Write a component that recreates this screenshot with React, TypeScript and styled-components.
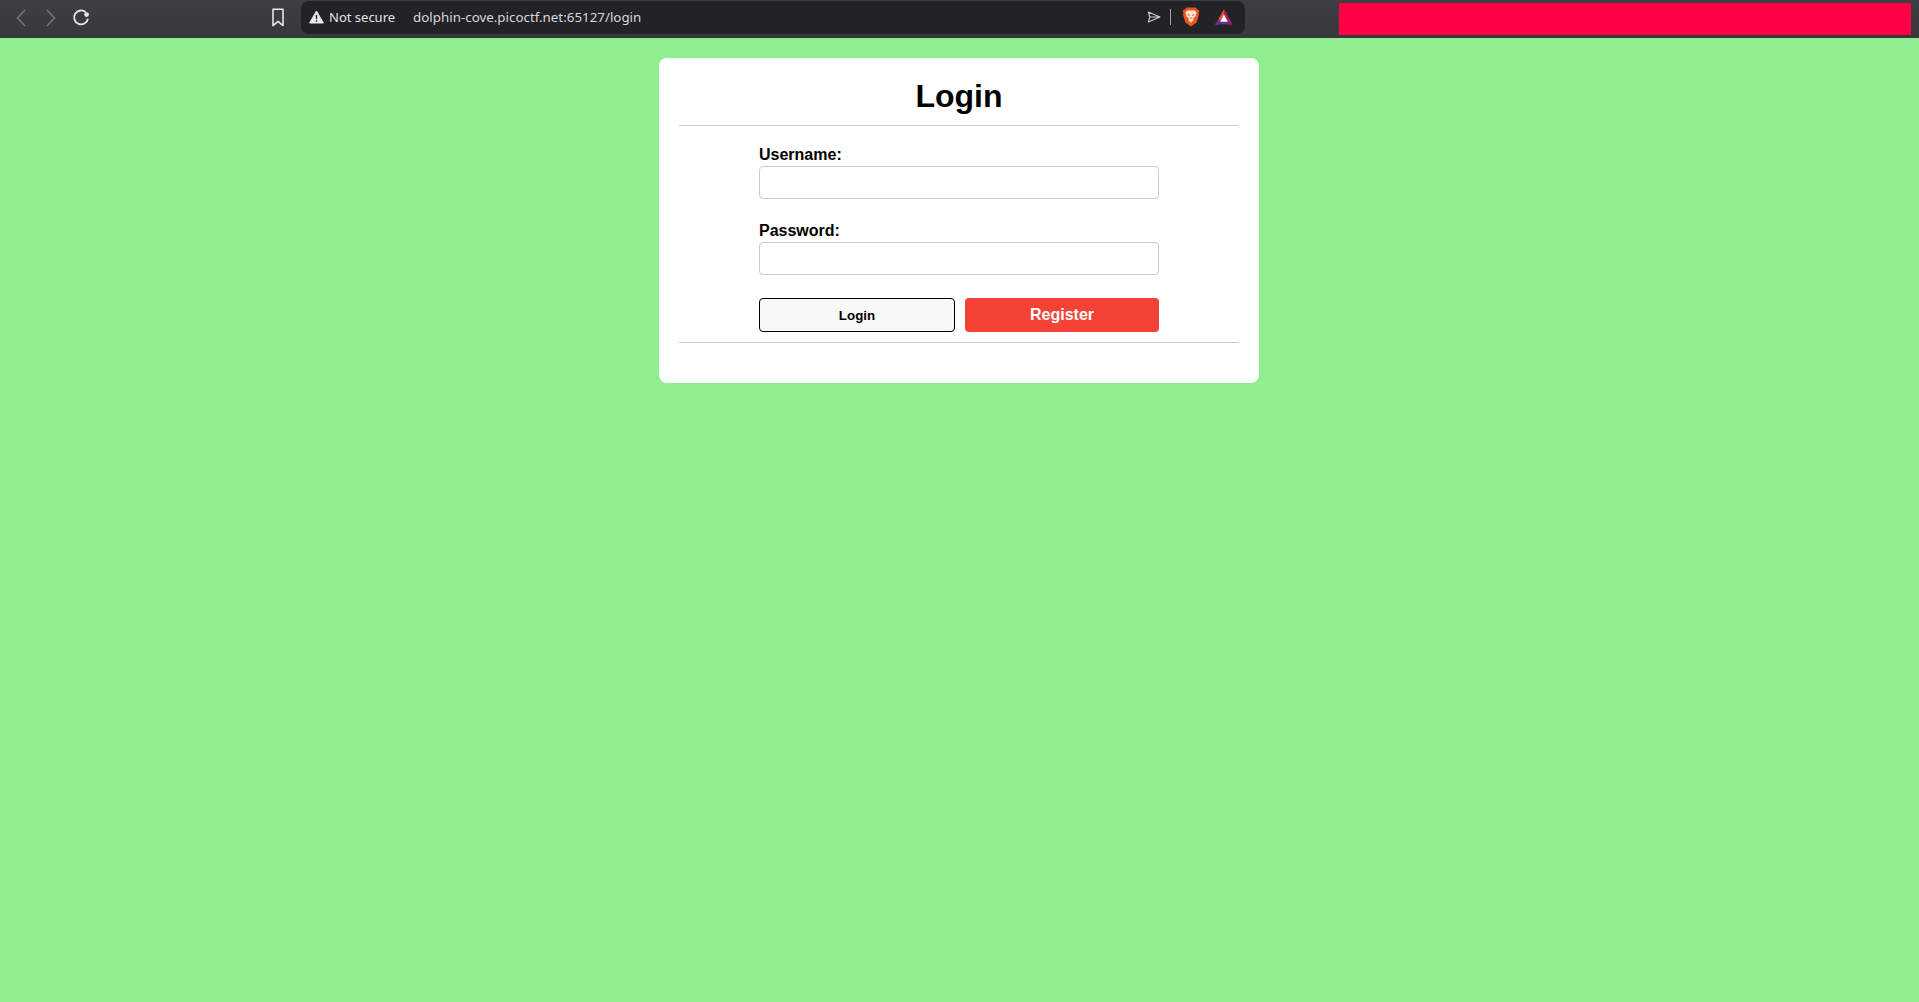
import styled, { createGlobalStyle } from 'styled-components';

const GlobalStyle = createGlobalStyle`
  html, body {
    margin: 0;
    padding: 0;
    height: 100%;
    overflow: hidden;
    background: #90ee90;
  }
  * {
    box-sizing: border-box;
  }
`;

const Page = styled.div`
  display: flex;
  flex-flow: column nowrap;
  height: 100vh;
  background: #90ee90;
  font-family: 'Liberation Sans', Arial, sans-serif;
`;

const Toolbar = styled.header`
  flex: 0 0 38px;
  display: flex;
  align-items: flex-start;
  padding: 1px 8px 0 0;
  background: linear-gradient(#3e3e43, #37373c);
`;

const NavGroup = styled.nav`
  flex: 0 0 301px;
  height: 33px;
  display: flex;
  align-items: center;
  padding-left: 12px;
`;

const NavButton = styled.button<{ $dim?: boolean; $gap?: number }>`
  display: flex;
  width: 18px;
  height: 22px;
  align-items: center;
  justify-content: center;
  padding: 0;
  border: 0;
  background: none;
  margin-right: ${(p) => p.$gap ?? 12}px;
  color: ${(p) => (p.$dim ? '#75757a' : '#e6e6e8')};
`;

const AddressBar = styled.div`
  flex: 0 0 944px;
  height: 33px;
  display: flex;
  align-items: center;
  padding: 0 12px 2px 8px;
  border-radius: 8px;
  background: #222227;
  color: #e4e4e6;
  font-family: 'Noto Sans', sans-serif;
  font-size: 13px;
`;

const SecurityLabel = styled.span`
  margin-left: 5px;
  white-space: nowrap;
`;

const Url = styled.span`
  margin-left: 18px;
  flex: 1 1 auto;
  white-space: nowrap;
  color: #d8d8da;
  font-size: 13.35px;
`;

const Separator = styled.span`
  width: 1px;
  height: 16px;
  margin: 0 11px 0 9px;
  background: #a8a8ac;
`;

const LogoGap = styled.span`
  width: 15px;
`;

const Redaction = styled.div`
  flex: 0 0 572px;
  height: 32px;
  margin: 2px 0 0 94px;
  background: #ff0044;
`;

const Main = styled.main`
  flex: 1 1 auto;
  padding: 20px 1px 0 0;
`;

const Card = styled.section`
  width: 600px;
  height: 325px;
  margin: 0 auto;
  padding: 20px;
  border-radius: 8px;
  background: #fff;
  color: #000;
`;

const Title = styled.h1`
  margin: 0;
  font-size: 32px;
  line-height: 37px;
  font-weight: bold;
  text-align: center;
`;

const Rule = styled.hr`
  height: 1px;
  margin: 10px 0 0;
  border: 0;
  background: #ccc;
`;

const Form = styled.form`
  width: 400px;
  margin: 20px auto 0;
  display: flex;
  flex-flow: column nowrap;
`;

const Field = styled.label`
  display: block;
  margin-bottom: 23px;
  font-size: 16px;
  line-height: 18px;
  font-weight: bold;
`;

const FieldName = styled.span`
  display: block;
  margin-bottom: 2px;
`;

const Input = styled.input`
  display: block;
  width: 100%;
  height: 33px;
  padding: 8px;
  border: 1px solid #ccc;
  border-radius: 4px;
  background: #fff;
  outline: none;
`;

const Actions = styled.div`
  display: flex;
  gap: 10px;
`;

const LoginButton = styled.button`
  flex: 1 1 0;
  height: 34px;
  border: 1px solid #000;
  border-radius: 4px;
  background: #f8f8f8;
  color: #000;
  font-family: 'Liberation Sans', Arial, sans-serif;
  font-size: 13.33px;
  font-weight: bold;
`;

const RegisterButton = styled.button`
  flex: 1 1 0;
  height: 34px;
  border: 0;
  border-radius: 4px;
  background: #f44336;
  color: #fff;
  font-family: 'Liberation Sans', Arial, sans-serif;
  font-size: 16px;
  font-weight: bold;
  padding-bottom: 1px;
`;

const ChevronLeft = () => (
  <svg width="12" height="18" viewBox="0 0 12 18" fill="none" stroke="currentColor" strokeWidth="1.6">
    <path d="M10 1 L2.5 9 L10 17" />
  </svg>
);

const ChevronRight = () => (
  <svg width="12" height="18" viewBox="0 0 12 18" fill="none" stroke="currentColor" strokeWidth="1.6">
    <path d="M2 1 L9.5 9 L2 17" />
  </svg>
);

const Reload = () => (
  <svg width="18" height="18" viewBox="0 0 18 18" fill="none" stroke="currentColor" strokeWidth="1.8">
    <path d="M13.8 3.2 A7 7 0 1 0 16 9.8" />
    <circle cx="14.6" cy="5.6" r="2.4" fill="currentColor" stroke="none" />
  </svg>
);

const Bookmark = () => (
  <svg width="14" height="19" viewBox="0 0 14 19" fill="none" stroke="#ededef" strokeWidth="1.5">
    <path d="M2 1.2 H12 V17.6 L7 13.4 L2 17.6 Z" strokeLinejoin="round" />
  </svg>
);

const Warning = () => (
  <svg width="15" height="14" viewBox="0 0 15 14">
    <path d="M7.5 1 L14.4 13 H0.6 Z" fill="#e8e8ea" stroke="#e8e8ea" strokeLinejoin="round" />
    <rect x="6.8" y="4.8" width="1.4" height="4.4" fill="#222227" />
    <rect x="6.8" y="10.2" width="1.4" height="1.5" fill="#222227" />
  </svg>
);

const Send = () => (
  <svg width="14" height="12" viewBox="0 0 14 12" fill="none" stroke="#c9c9cc" strokeWidth="1.2">
    <path d="M1.4 1 L13 6 L1.4 11 L2.8 6 Z M2.8 6 H13" strokeLinejoin="round" />
  </svg>
);

const BraveLogo = () => (
  <svg width="18" height="20" viewBox="0 0 18 20">
    <path d="M4.6 0.6 H13.4 L15.4 2.6 L17.4 3.4 L16.6 5.6 L17 7.4 L14.6 15.6 L9 19.6 L3.4 15.6 L1 7.4 L1.4 5.6 L0.6 3.4 L2.6 2.6 Z" fill="#f0561d" />
    <path d="M5.4 3.4 H12.6 L14.6 5.6 L13.4 9.6 L11 11.4 L11.6 13 L9 15.6 L6.4 13 L7 11.4 L4.6 9.6 L3.4 5.6 Z" fill="#fbe3d6" />
    <path d="M5.4 7 L7.8 7.8 L7.2 9.6 Z M12.6 7 L10.2 7.8 L10.8 9.6 Z" fill="#f0561d" />
    <path d="M9 10 L10.4 11.6 H7.6 Z" fill="#f0561d" />
  </svg>
);

const BatLogo = () => (
  <svg width="18" height="16" viewBox="0 0 18 16">
    <path d="M9 0.4 L13 8 H5 Z" fill="#f0552a" />
    <path d="M9 0.4 L17.8 15.6 H13 L9 8 Z" fill="#9e1f63" />
    <path d="M9 0.4 L0.2 15.6 H3.4 L9 6 Z" fill="#e8502f" />
    <path d="M0.2 15.6 L3.6 9.8 L6 12.8 H12 L17.8 15.6 Z" fill="#662d91" />
    <path d="M9 5.6 L12.8 12.8 H5.2 Z" fill="#ffffff" />
  </svg>
);

export default function App() {
  return (
    <>
      <GlobalStyle />
      <Page>
        <Toolbar>
          <NavGroup>
            <NavButton $dim>
              <ChevronLeft />
            </NavButton>
            <NavButton $dim>
              <ChevronRight />
            </NavButton>
            <NavButton $gap={179}>
              <Reload />
            </NavButton>
            <NavButton>
              <Bookmark />
            </NavButton>
          </NavGroup>
          <AddressBar>
            <Warning />
            <SecurityLabel>Not secure</SecurityLabel>
            <Url>dolphin-cove.picoctf.net:65127/login</Url>
            <Send />
            <Separator />
            <BraveLogo />
            <LogoGap />
            <BatLogo />
          </AddressBar>
          <Redaction />
        </Toolbar>
        <Main>
          <Card>
            <Title>Login</Title>
            <Rule />
            <Form>
              <Field>
                <FieldName>Username:</FieldName>
                <Input type="text" />
              </Field>
              <Field>
                <FieldName>Password:</FieldName>
                <Input type="password" />
              </Field>
              <Actions>
                <LoginButton type="button">Login</LoginButton>
                <RegisterButton type="button">Register</RegisterButton>
              </Actions>
            </Form>
            <Rule />
          </Card>
        </Main>
      </Page>
    </>
  );
}
